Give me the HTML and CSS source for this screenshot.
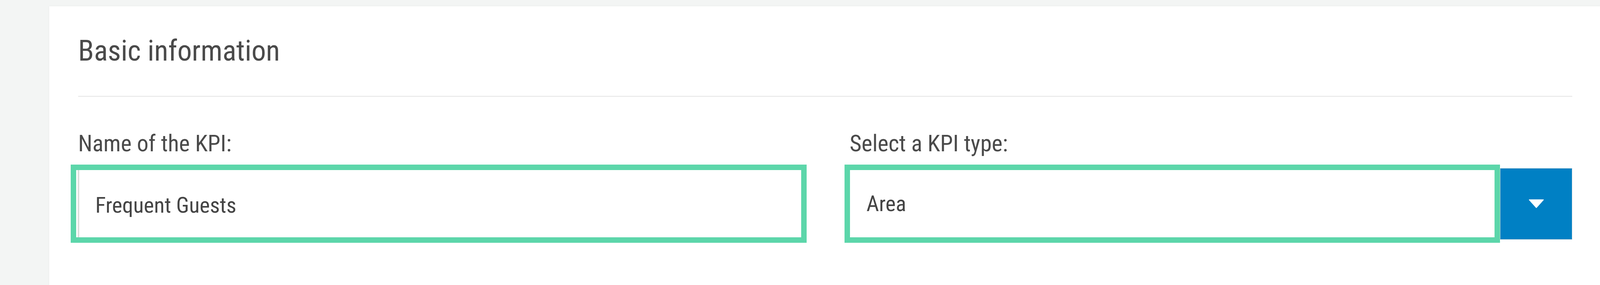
FILE: index.html
```html
<!DOCTYPE html>
<html lang="en">
<head>
<meta charset="utf-8">
<title>Basic information</title>
<link rel="stylesheet" href="styles.css">
</head>
<body>
<section class="card">
  <h2 class="card-title">Basic information</h2>
  <hr class="divider">
  <div class="form-grid">
    <div class="field">
      <label class="field-label" for="kpi-name">Name of the KPI:</label>
      <div class="text-input">
        <span class="input-value" id="kpi-name">Frequent Guests</span>
      </div>
    </div>
    <div class="field">
      <label class="field-label">Select a KPI type:</label>
      <div class="select-row">
        <div class="text-input select-input">
          <span class="input-value">Area</span>
        </div>
        <button class="select-button" type="button" aria-label="Open">
          <svg class="caret" width="40" height="22" viewBox="0 0 40 22">
            <path d="M2 1 H38 L20 21 Z" fill="#ffffff" stroke="#ffffff" stroke-width="2" stroke-linejoin="round"/>
          </svg>
        </button>
      </div>
    </div>
  </div>
</section>
</body>
</html>
```
FILE: styles.css
```css
html, body {
  margin: 0;
  padding: 0;
}
body {
  background: #f3f5f4;
  font-family: "Roboto Condensed", Roboto, "Liberation Sans", sans-serif;
  color: #4a4a4a;
}
.card {
  margin: 16px 0 0 126px;
  width: 3976px;
  min-height: calc(100vh - 16px);
  box-sizing: border-box;
  background: #ffffff;
  padding: 70px 77px 0 74px;
  box-shadow: 0 0 4px rgba(0, 0, 0, 0.06);
}
.card-title {
  margin: 0;
  font-size: 74px;
  line-height: 87px;
  font-weight: 400;
  color: #4a4a4a;
}
.divider {
  margin: 72px 0 0 0;
  border: 0;
  height: 3px;
  background: #ececec;
}
.form-grid {
  margin-top: 84px;
  display: grid;
  grid-template-columns: 1fr 1fr;
  column-gap: 125px;
}
.field-label {
  display: block;
  font-size: 59px;
  line-height: 69px;
  margin-bottom: 34px;
}
.text-input {
  height: 172px;
  box-sizing: border-box;
  margin-left: -5px;
  width: calc(100% + 6px);
  background: #ffffff;
  outline: 14px solid #5cd6aa;
  box-shadow: inset 4px 0 0 #ffffff, inset 8px 0 0 #dedede;
  display: flex;
  align-items: center;
  padding: 8px 0 0 49px;
}
.input-value {
  font-size: 56px;
  line-height: 66px;
  color: #444444;
}
.select-row {
  display: flex;
  align-items: center;
  height: 172px;
  gap: 14px;
}
.select-input {
  flex: 1;
  margin-left: 1px;
  width: auto;
  box-shadow: none;
  padding: 0 0 0 42px;
}
.select-button {
  flex: 0 0 185px;
  height: 183px;
  margin: 0;
  padding: 0;
  border: 1px solid #c9d3d8;
  background: #0080c4;
  display: flex;
  align-items: center;
  justify-content: center;
}
.caret {
  display: block;
}
```
